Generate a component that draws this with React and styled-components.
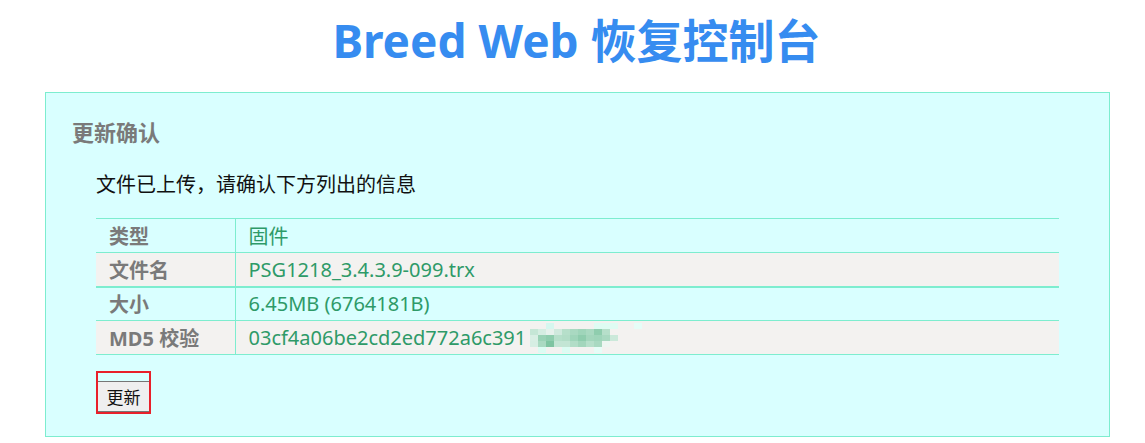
import * as React from "react";
import styled, { createGlobalStyle } from "styled-components";

const GlobalStyle = createGlobalStyle`
  body {
    margin: 0;
    background: #ffffff;
    font-family: "Noto Sans", "Noto Sans CJK SC", sans-serif;
  }
`;

const rows = [
  { label: "类型", value: "固件" },
  { label: "文件名", value: "PSG1218_3.4.3.9-099.trx", shaded: true },
  { label: "大小", value: "6.45MB (6764181B)", thick: true },
  { label: "MD5 校验", value: "03cf4a06be2cd2ed772a6c391", shaded: true, masked: true },
];

// pixelated tail of the hash
const mosaic = [
  ["", "", "#d6f7ef", "", "", "", "", "", "#dffcf3", "#dffcf3", "#dffcf3", "", "", "#e6fdf7", ""],
  ["#c5e6d6", "#d5ede2", "#e6f1ec", "#cfe9dd", "#b6dfca", "#a9d9c1", "#9fd5ba", "#a9d9c1", "#8fcdae", "#b6dfca", "", "", "", "", ""],
  ["#d8eee4", "#9ad2b6", "#8fcdae", "#b6dfca", "#b2ddc7", "#9fd5ba", "#8fcdae", "#a3d6bc", "#9fd5ba", "#a9d9c1", "#cbe9da", "", "", "", ""],
  ["#d6eee3", "#a9d9c1", "#7ec4a1", "#c3e5d4", "#c3e5d4", "#b2ddc7", "#a3d6bc", "#b6dfca", "#a9d9c1", "#eef6f2", "", "", "", "", ""],
  ["", "#dcfcf3", "", "", "#dcfcf3", "", "", "", "#e6fdf7", "", "", "", "", "", ""],
];

const Mosaic = () => (
  <MosaicGrid>
    {mosaic.flat().map((c, i) => (
      <MosaicCell key={i} $color={c} />
    ))}
  </MosaicGrid>
);

const App = () => {
  return (
    <>
      <GlobalStyle />
      <Title>Breed Web 恢复控制台</Title>
      <Panel>
        <Heading>更新确认</Heading>
        <Body>
          <Intro>文件已上传，请确认下方列出的信息</Intro>
          <InfoTable>
            <tbody>
              {rows.map((r) => (
                <Row key={r.label} $shaded={r.shaded} $thick={r.thick}>
                  <Label>{r.label}</Label>
                  <Value>
                    <ValueInner>
                      {r.value}
                      {r.masked ? <Mosaic /> : null}
                    </ValueInner>
                  </Value>
                </Row>
              ))}
            </tbody>
          </InfoTable>
          <ButtonFrame>
            <UpdateButton type="button">更新</UpdateButton>
          </ButtonFrame>
        </Body>
      </Panel>
    </>
  );
};

export default App;

const Title = styled.h1`
  margin: 0;
  padding: 13px 0 0 8px;
  height: 80px;
  box-sizing: border-box;
  text-align: center;
  font-size: 46px;
  line-height: 54px;
  font-weight: 700;
  color: #368cf0;
`;

const Panel = styled.section`
  margin: 12px 35px 0 45px;
  box-sizing: border-box;
  height: 345px;
  border: 1px solid #7dedcf;
  background: #d9ffff;
  padding: 24px 26px 0;
`;

const Heading = styled.h3`
  margin: 0;
  font-size: 22px;
  line-height: 30px;
  font-weight: 700;
  color: #7a7a7a;
`;

const Body = styled.div`
  margin: 0 24px;
`;

const Intro = styled.p`
  margin: 24px 0 19px;
  font-size: 20px;
  line-height: 28px;
  color: #111;
`;

const InfoTable = styled.table`
  width: 100%;
  border-collapse: collapse;
  font-size: 20px;
`;

const Row = styled.tr`
  background: ${(p) => (p.$shaded ? "#f3f2f0" : "transparent")};
  border-top: ${(p) => (p.$thick ? "2px" : "1px")} solid #7dedcf;
  border-bottom: 1px solid #7dedcf;
`;

const Label = styled.td`
  width: 139px;
  height: 34px;
  padding: 0 0 0 13px;
  box-sizing: border-box;
  border-right: 1px solid #7dedcf;
  font-weight: 700;
  color: #7a7a7a;
  white-space: nowrap;
`;

const Value = styled.td`
  padding: 0 0 0 13px;
  color: #2e9a68;
  white-space: nowrap;
`;

const ValueInner = styled.span`
  display: inline-flex;
  align-items: center;
`;

const MosaicGrid = styled.span`
  display: inline-grid;
  grid-template-columns: repeat(15, 8px);
  grid-auto-rows: 6px;
  margin-left: 4px;
`;

const MosaicCell = styled.span`
  background: ${(p) => p.$color || "transparent"};
`;

const ButtonFrame = styled.div`
  display: inline-block;
  margin-top: 16px;
  padding-top: 8px;
  border: 2px solid #e8202a;
`;

const UpdateButton = styled.button`
  display: block;
  width: 51px;
  height: 31px;
  margin: 0;
  padding: 0;
  border: none;
  border-top: 1px solid #767676;
  border-bottom: 1px solid #767676;
  background: #efefef;
  font-family: "Noto Sans CJK SC", sans-serif;
  font-size: 17px;
  color: #111;
`;
